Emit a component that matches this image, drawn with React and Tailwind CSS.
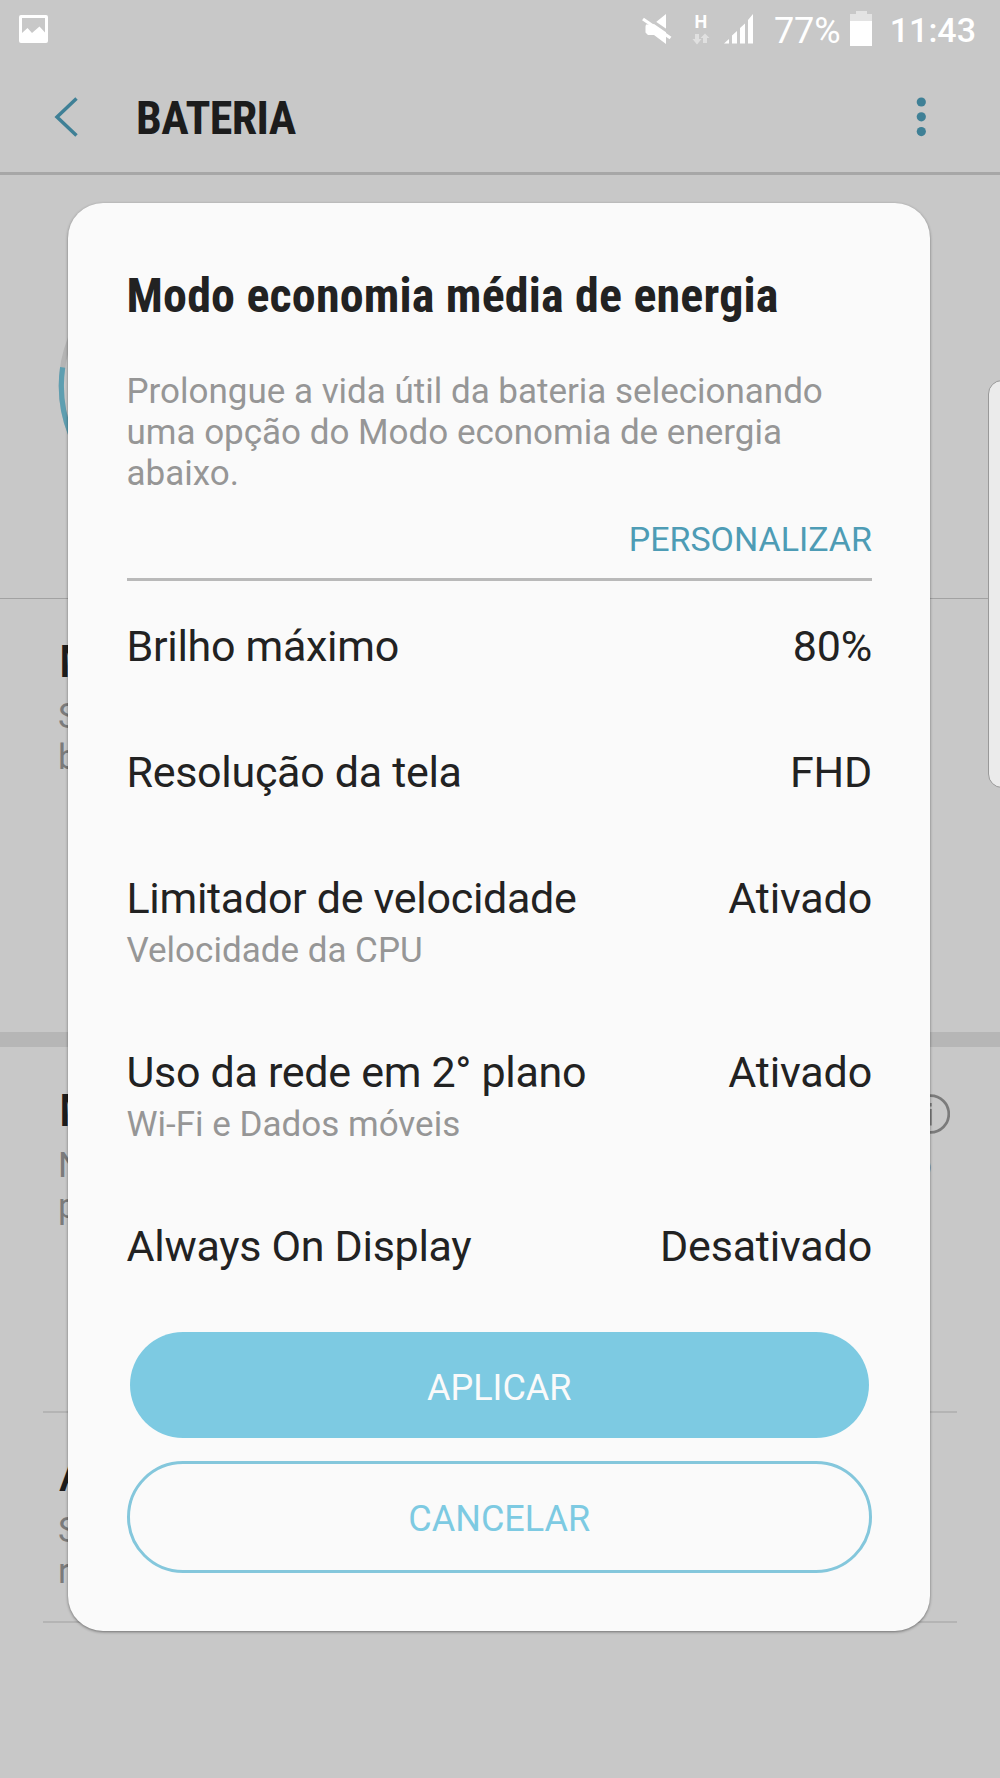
const options = [
  { label: 'Brilho máximo', value: '80%' },
  { label: 'Resolução da tela', value: 'FHD' },
  { label: 'Limitador de velocidade', hint: 'Velocidade da CPU', value: 'Ativado' },
  { label: 'Uso da rede em 2° plano', hint: 'Wi-Fi e Dados móveis', value: 'Ativado' },
  { label: 'Always On Display', value: 'Desativado' },
];

function StatusBar() {
  return (
    <div className="flex h-[58px] items-start justify-between pl-[19px] pr-6 text-white">
      <svg className="mt-[15px]" width="29" height="28" viewBox="0 0 29 28">
        <path fill="currentColor" fillRule="evenodd"
          d="M2 0h25a2 2 0 0 1 2 2v24a2 2 0 0 1-2 2H2a2 2 0 0 1-2-2V2a2 2 0 0 1 2-2zM3 3v15l5.500-5 4.500 5 7.500-6.500 5.500 6V3z" />
      </svg>
      <div className="flex items-start">
        <svg className="mt-[13px]" width="30" height="32" viewBox="0 0 30 32">
          <path fill="currentColor" d="M4 11.500h7L24 1v30L12 22H6l-2.500-2.500v-6z" />
          <path stroke="#c8c8c8" strokeWidth="3" d="M3 3l27 18.500" />
          <path stroke="currentColor" strokeWidth="3.200" d="M1 6l27.500 19" />
        </svg>
        <div className="ml-[19px] mt-[13px] flex w-[20px] flex-col items-center">
          <span className="text-[18px] font-bold leading-[17px]">H</span>
          <svg className="mt-[3px]" width="18" height="12" viewBox="0 0 18 12" fill="#e0e0e0">
            <path d="M3 1h4v5h2.500L5 11.500.5 6H3z" />
            <path d="M11 10h4V5h2.500L13 .5 8.500 5H11z" />
          </svg>
        </div>
        <svg className="ml-[13px] mt-[14px]" width="30" height="30" viewBox="0 0 30 30" fill="currentColor">
          <path d="M0 29.500L5 25v4.500zM8 29.500v-8l5-4.500v12.500zM16 29.500V14l5-4.500v20zM24 29.500V6l5-6v29.500z" />
        </svg>
        <span className="ml-[20px] mt-[9px] text-[36px] leading-[44px]">77%</span>
        <svg className="ml-[9px] mt-[11px]" width="22" height="35" viewBox="0 0 22 35">
          <path fill="#e3e3e3" d="M6 0h11v3h5v8H0V3h6z" />
          <path fill="currentColor" d="M0 10h22v25H0z" />
        </svg>
        <span className="ml-[18px] mt-[8px] text-[34px] font-medium leading-[44px]">11:43</span>
      </div>
    </div>
  );
}

function Header() {
  return (
    <div className="flex h-[117px] items-center border-b-[3px] border-[#a7a7a7] pl-[54px] pr-[74px] pt-[4px]">
      <svg width="24" height="40" viewBox="0 0 24 40" fill="none">
        <path stroke="#3f8096" strokeWidth="3.500" d="M22.500 1.500L3 20l19.500 18.500" />
      </svg>
      <h1 className="ml-[58px] mt-[2px] font-[Roboto_Condensed] text-[46px] font-bold leading-[54px] tracking-[-0.6px] text-[#1c1c1c]">BATERIA</h1>
      <svg className="ml-auto" width="10" height="40" viewBox="0 0 10 40" fill="#3f8096">
        <circle cx="5.300" cy="5" r="4.600" />
        <circle cx="5.300" cy="19.800" r="4.600" />
        <circle cx="5.300" cy="34.600" r="4.600" />
      </svg>
    </div>
  );
}

function BatteryRing() {
  return (
    <svg width="266" height="266" viewBox="0 0 266 266" fill="none" strokeWidth="5.200">
      <circle cx="133" cy="133" r="129.700" stroke="#b4b4b4" />
      <circle cx="133" cy="133" r="129.700" stroke="#5e9eb0" pathLength="100" strokeDasharray="77.3 22.7" transform="rotate(-90 133 133)" />
    </svg>
  );
}

function Setting({ title, lines }) {
  return (
    <div>
      <div className="pl-px text-[44px] font-medium leading-[50px] text-[#1c1c1c]">{title}</div>
      <div className="mt-[9px] text-[35px] leading-[41px] text-[#7b7b7b]">
        {lines.map(l => <div key={l}>{l}</div>)}
      </div>
    </div>
  );
}

function BatteryPage() {
  return (
    <div className="flex h-full flex-col">
      <StatusBar />
      <Header />
      <div className="h-[424px] border-b border-[#a2a2a2] pl-[58px] pt-[78px]">
        <BatteryRing />
      </div>
      <div className="h-[433px] pl-[58px] pt-[38px]">
        <Setting title="Modo" lines={['Selecione', 'bateria']} />
      </div>
      <div className="h-[15px] bg-[#b6b6b6]" />
      <div className="flex h-[364px] justify-between pl-[58px] pr-[50px] pt-[39px]">
        <Setting title="Monitor" lines={['Nenhum', 'problema']} />
        <div className="flex flex-col">
          <svg className="mt-[8px]" width="40" height="40" viewBox="0 0 40 40" fill="none" stroke="#7b7b7b">
            <circle cx="20.500" cy="20" r="18.300" strokeWidth="2.700" />
            <path strokeWidth="3.500" d="M20 9v3.500M20 15v16.500" />
          </svg>
          <span className="mt-[11px] w-[22px] text-right text-[35px] leading-[41px] text-[#7b7b7b]">o</span>
        </div>
      </div>
      <div className="mx-[43px] h-[212px] border-y-2 border-[#b4b4b4] pl-[15px] pt-[38px]">
        <Setting title="Aplicativos" lines={['Sem', 'recentes']} />
      </div>
    </div>
  );
}

function PowerDialog() {
  return (
    <div className="absolute left-[68px] top-[203px] w-[862px] rounded-[35px] bg-[#fafafa] pb-[58px] pl-[58.5px] pr-[58px] pt-[65px] text-[#222] shadow-[0_1px_3px_rgba(0,0,0,0.45)]">
      <h2 className="whitespace-nowrap font-[Roboto_Condensed] text-[48px] font-bold leading-[56px] tracking-[0.18px]">Modo economia média de energia</h2>
      <p className="mt-[47px] text-[35px] leading-[41px] tracking-[-0.01px] text-[#969696]">
        Prolongue a vida útil da bateria selecionando<br />
        uma opção do Modo economia de energia<br />
        abaixo.
      </p>
      <button className="ml-auto mt-[25px] block text-[34px] leading-[41px] text-[#4e9cb5]">PERSONALIZAR</button>
      <div className="mt-[18px] h-[3px] bg-[#b9b9b9]" />

      <div className="mt-10 flex flex-col gap-[76px]">
        {options.map(o => (
          <div key={o.label} className="flex justify-between text-[43px] leading-[50px]">
            <div>
              <div className="tracking-[-0.3px]">{o.label}</div>
              {o.hint && <div className="mt-[7px] text-[35px] leading-[41px] text-[#969696]">{o.hint}</div>}
            </div>
            <div className="tracking-[-0.18px]">{o.value}</div>
          </div>
        ))}
      </div>

      <div className="mt-[61px] flex flex-col">
        <button className="mx-[3px] h-[106px] rounded-full bg-[#7dcae2] pt-[5px] text-[36px] text-[#fafafa]">APLICAR</button>
        <button className="mt-[23px] h-[112px] rounded-full border-[3px] border-[#84c7dc] pt-[4px] text-[36px] text-[#7dcae2]">CANCELAR</button>
      </div>
    </div>
  );
}

export default function App() {
  return (
    <div className="relative h-[1778px] w-[1000px] overflow-hidden bg-[#c8c8c8] font-[Roboto,sans-serif]">
      <BatteryPage />
      {/* edge panel handle */}
      <div className="absolute left-[988px] top-[380px] h-[408px] w-10 rounded-[14px] border border-[#999] bg-[#ebebeb]" />
      <PowerDialog />
    </div>
  );
}
